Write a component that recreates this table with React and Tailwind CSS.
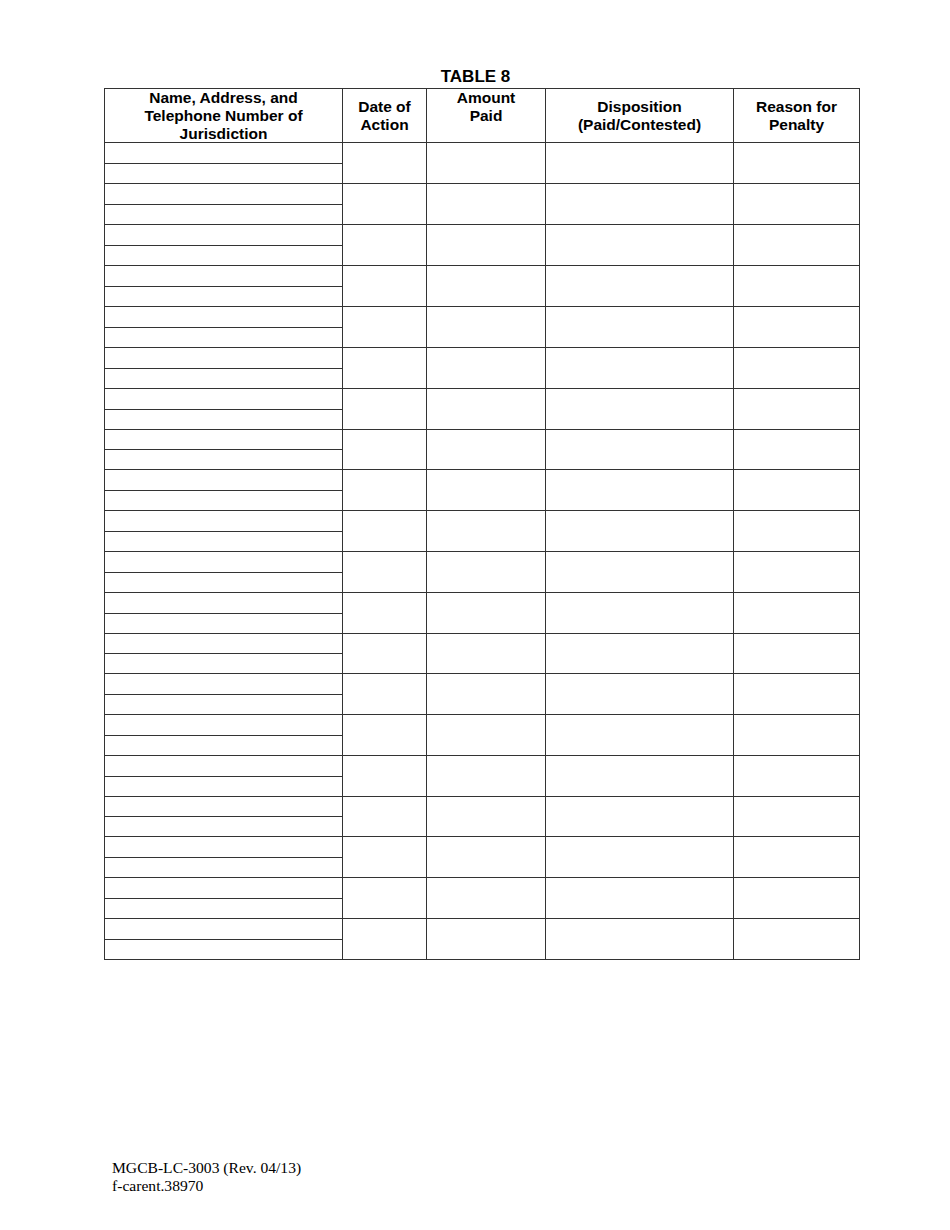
import React from 'react';

// row heights taken from the scanned form (some rows are 1px shorter)
const rowHeights = [41, 41, 41, 41, 41, 41, 41, 40, 41, 41, 41, 41, 40, 41, 41, 41, 40, 41, 41, 41];

export default function App() {
  return (
    <div className="w-[950px] h-[1230px] bg-white relative" style={{ fontFamily: '"Liberation Sans", Arial, sans-serif' }}>
      <div className="pt-[66px] pl-[104px]">
        <div className="w-[755px] pr-[12px] text-center font-bold text-[17px] leading-[22px] text-black">TABLE 8</div>
        <table className="border-collapse table-fixed w-[755px] text-black">
          <colgroup>
            <col className="w-[238px]" />
            <col className="w-[84px]" />
            <col className="w-[119px]" />
            <col className="w-[188px]" />
            <col className="w-[126px]" />
          </colgroup>
          <thead>
            <tr className="h-[53px] text-[15.5px] leading-[18px] font-bold">
              <th className="border border-[#333] align-middle p-0">
                <div className="h-[53px] flex flex-col justify-center">
                  <div>Name, Address, and</div>
                  <div>Telephone Number of</div>
                  <div>Jurisdiction</div>
                </div>
              </th>
              <th className="border border-[#333] align-middle p-0">Date of<br />Action</th>
              <th className="border border-[#333] align-top p-0">Amount<br />Paid</th>
              <th className="border border-[#333] align-middle p-0">Disposition<br />(Paid/Contested)</th>
              <th className="border border-[#333] align-middle p-0">Reason for<br />Penalty</th>
            </tr>
          </thead>
          <tbody>
            {rowHeights.map((h, r) => (
              <tr key={r} style={{ height: h }}>
                <td className="border border-[#333] p-0">
                  <div className="flex flex-col" style={{ height: h - 1 }}>
                    <div className="flex-1 border-b border-[#333]" />
                    <div className="flex-1" />
                  </div>
                </td>
                <td className="border border-[#333] p-0" />
                <td className="border border-[#333] p-0" />
                <td className="border border-[#333] p-0" />
                <td className="border border-[#333] p-0" />
              </tr>
            ))}
          </tbody>
        </table>
      </div>
      <div className="absolute left-[112px] top-[1159px] text-[15.6px] leading-[18px] text-black" style={{ fontFamily: '"Liberation Serif", "Times New Roman", serif' }}>
        <div>MGCB-LC-3003 (Rev. 04/13)</div>
        <div>f-carent.38970</div>
      </div>
    </div>
  );
}
